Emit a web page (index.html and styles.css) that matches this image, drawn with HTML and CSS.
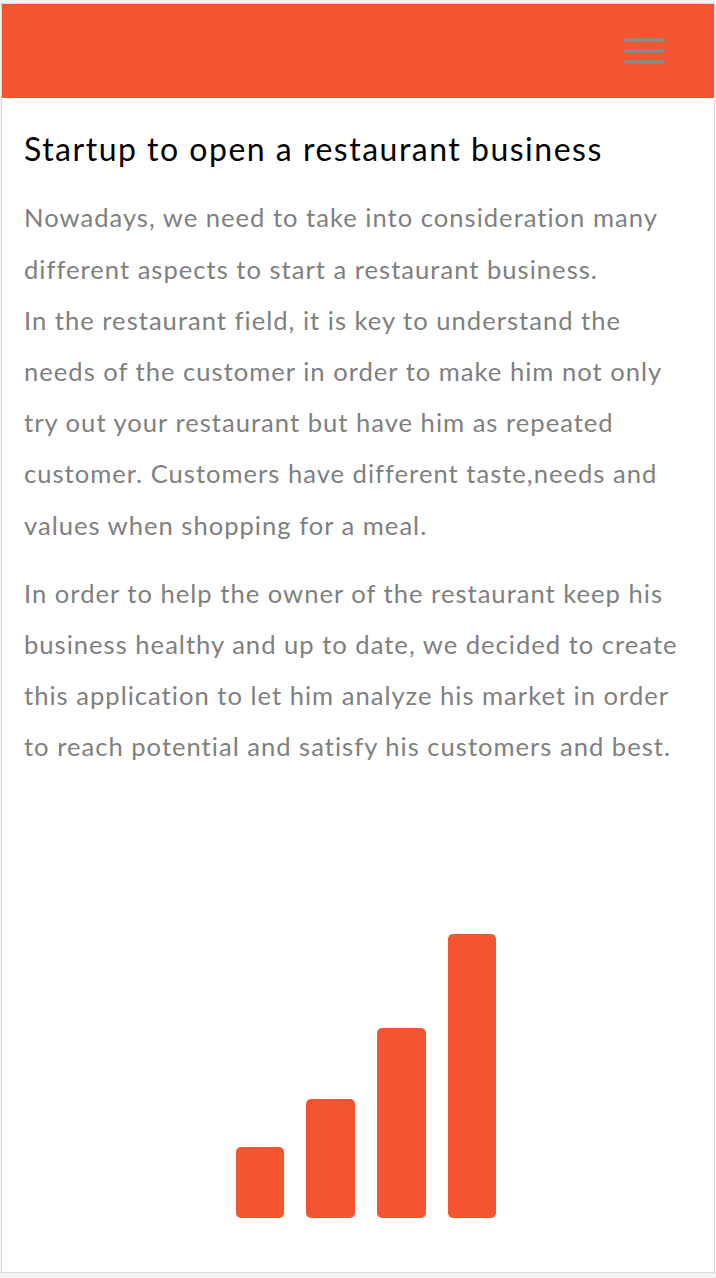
FILE: index.html
```html
<!DOCTYPE html>
<html lang="en">
<head>
<meta charset="utf-8">
<title>Startup to open a restaurant business</title>
<link rel="stylesheet" href="styles.css">
</head>
<body>
<div class="frame">
  <header class="topbar">
    <button class="menu" aria-label="Menu">
      <span class="menu-line"></span>
      <span class="menu-line"></span>
      <span class="menu-line"></span>
    </button>
  </header>
  <main class="content">
    <h1 class="title">Startup to open a restaurant business</h1>
    <p class="text">Nowadays, we need to take into consideration many different aspects to start a restaurant business.<br>In the restaurant field, it is key to understand the needs of the customer in order to make him not only try out your restaurant but have him as repeated customer. Customers have different taste,needs and values when shopping for a meal.</p>
    <p class="text">In order to help the owner of the restaurant keep his business healthy and up to date, we decided to create this application to let him analyze his market in order to reach potential and satisfy his customers and best.</p>
  </main>
  <div class="chart">
    <div class="bar" style="height:71px"></div>
    <div class="bar" style="height:119px"></div>
    <div class="bar" style="height:190px"></div>
    <div class="bar" style="height:284px"></div>
  </div>
</div>
</body>
</html>
```
FILE: styles.css
```css
html, body {
  margin: 0;
  padding: 0;
}
body {
  background: #f2f2f2;
  padding-top: 3px;
  font-family: Lato, "Noto Sans", sans-serif;
}
.frame {
  margin: 0 1px;
  height: 1270px;
  box-sizing: border-box;
  border: 1px solid #d9d9d9;
  background: #ffffff;
  display: flex;
  flex-direction: column;
}
.topbar {
  height: 94px;
  background: #f2552f;
  display: flex;
  align-items: flex-start;
  justify-content: flex-end;
  padding-right: 49px;
  box-sizing: border-box;
}
.menu {
  margin-top: 34px;
  padding: 0;
  border: 0;
  background: none;
  display: flex;
  flex-direction: column;
  gap: 7.5px;
  cursor: pointer;
}
.menu-line {
  display: block;
  width: 41px;
  height: 3.5px;
  border-radius: 2px;
  background: #8c8884;
}
.content {
  padding: 0 22px 0 22px;
}
.title {
  margin: 32px 0 24px;
  font-size: 32px;
  font-weight: 400;
  line-height: 1.2;
  letter-spacing: 1.5px;
  color: #000000;
}
.text {
  margin: 0 0 17px;
  font-size: 25.6px;
  line-height: 2;
  letter-spacing: 1px;
  color: #808080;
}
.chart {
  margin-top: auto;
  display: flex;
  align-items: flex-end;
  justify-content: center;
  gap: 22px;
  padding: 0 0 54px 16px;
}
.bar {
  width: 48.6px;
  background: #f2552f;
  border-radius: 5px;
}
```
